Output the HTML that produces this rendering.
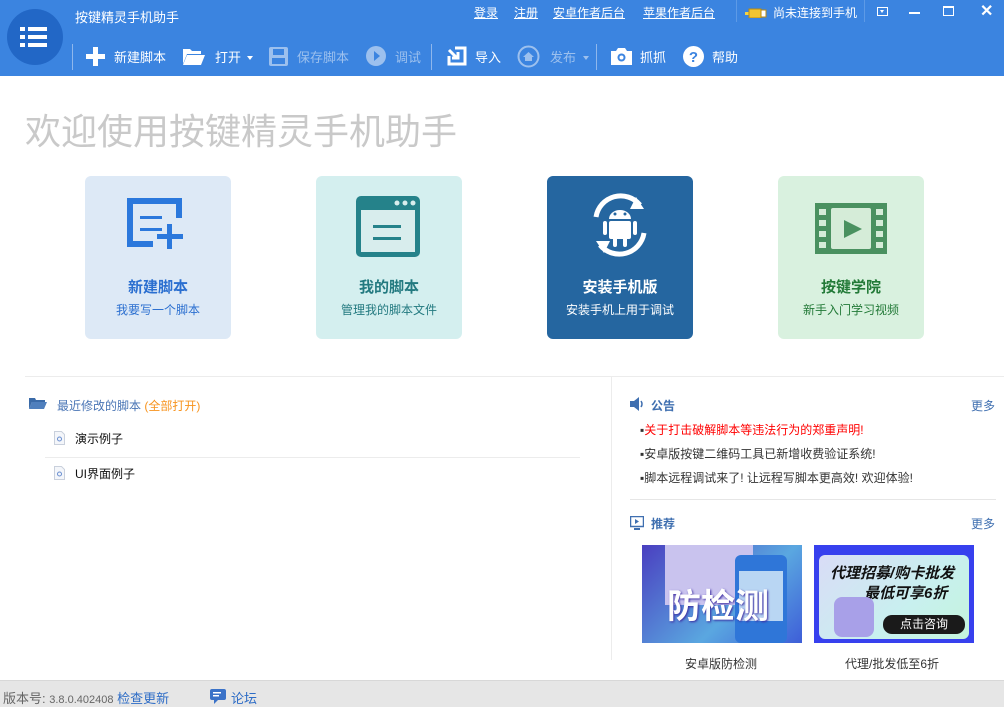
<!DOCTYPE html>
<html><head><meta charset="utf-8"><style>
*{margin:0;padding:0;box-sizing:border-box}
body{width:1004px;height:707px;overflow:hidden;background:#fff;font-family:"Liberation Sans","Noto Sans CJK SC",sans-serif;font-size:12px;position:relative;color:#333}
.a{position:absolute;white-space:nowrap}
#hd{position:absolute;left:0;top:0;width:1004px;height:76px;background:#3b84e0}
.tb{color:#fff;font-size:13px}
.dis{color:#9cc0ee}
.card{position:absolute;top:176px;width:146px;height:163px;border-radius:6px;text-align:center;overflow:hidden}
.card .t{position:absolute;top:100px;width:100%;font-size:15px;font-weight:bold}
.card .s{position:absolute;top:125px;width:100%;font-size:12px}
.card svg{position:absolute;left:40px;top:20px}
</style></head><body>
<div id="hd">
 <div class="a" style="left:7px;top:9px;width:56px;height:56px;border-radius:50%;background:#2267c6"></div>
 <svg class="a" style="left:20px;top:25px" width="30" height="24"><rect x="0" y="2" width="5" height="4" fill="#fff"/><rect x="8" y="2" width="19" height="4" fill="#fff"/><rect x="0" y="10" width="5" height="4" fill="#fff"/><rect x="8" y="10" width="19" height="4" fill="#fff"/><rect x="0" y="18" width="5" height="4" fill="#fff"/><rect x="8" y="18" width="19" height="4" fill="#fff"/></svg>
 <div class="a tb" style="left:75px;top:7px">按键精灵手机助手</div>
 <div class="a" style="left:72px;top:44px;width:1px;height:26px;background:#8fb7ec"></div>
 <svg class="a" style="left:86px;top:47px" width="19" height="19"><rect x="7" y="0" width="5" height="19" fill="#fff"/><rect x="0" y="7" width="19" height="5" fill="#fff"/></svg>
 <div class="a tb" style="left:114px;top:47px">新建脚本</div>
 <svg class="a" style="left:183px;top:47px" width="22" height="18"><path d="M0 2h7l2 2h9v3H4L0 17z" fill="#fff"/><path d="M4 8h18l-4 10H0z" fill="#fff"/></svg>
 <div class="a tb" style="left:215px;top:47px">打开</div>
 <div class="a" style="left:247px;top:56px;border:3px solid transparent;border-top:4px solid #fff"></div>
 <svg class="a" style="left:269px;top:47px" width="19" height="19"><rect width="19" height="19" rx="2" fill="#9cc0ee"/><rect x="4" y="2" width="11" height="6" fill="#3b84e0"/><rect x="3" y="11" width="13" height="6" fill="#3b84e0"/></svg>
 <div class="a tb dis" style="left:297px;top:47px">保存脚本</div>
 <svg class="a" style="left:366px;top:46px" width="20" height="20"><circle cx="10" cy="10" r="10" fill="#9cc0ee"/><path d="M8 5l6 5-6 5z" fill="#3b84e0"/></svg>
 <div class="a tb dis" style="left:395px;top:47px">调试</div>
 <div class="a" style="left:431px;top:44px;width:1px;height:26px;background:#8fb7ec"></div>
 <svg class="a" style="left:447px;top:46px" width="20" height="20"><path d="M8 2h10v16H2V10" fill="none" stroke="#fff" stroke-width="3"/><path d="M2 4l8 8M5 12h6V6" fill="none" stroke="#fff" stroke-width="3"/></svg>
 <div class="a tb" style="left:475px;top:47px">导入</div>
 <svg class="a" style="left:517px;top:45px" width="23" height="23"><circle cx="11.5" cy="11.5" r="10" fill="none" stroke="#9cc0ee" stroke-width="2"/><path d="M6 12l5.5-5 5.5 5h-2v4H8v-4z" fill="#9cc0ee"/></svg>
 <div class="a tb dis" style="left:550px;top:47px">发布</div>
 <div class="a" style="left:583px;top:56px;border:3px solid transparent;border-top:4px solid #9cc0ee"></div>
 <div class="a" style="left:596px;top:44px;width:1px;height:26px;background:#8fb7ec"></div>
 <svg class="a" style="left:611px;top:47px" width="21" height="18"><path d="M0 4h5l2-3h7l2 3h5v14H0z" fill="#fff"/><circle cx="10.5" cy="10.5" r="4" fill="#3b84e0"/><circle cx="10.5" cy="10.5" r="2" fill="#fff"/></svg>
 <div class="a tb" style="left:640px;top:47px">抓抓</div>
 <svg class="a" style="left:683px;top:46px" width="21" height="21"><circle cx="10.5" cy="10.5" r="10.5" fill="#fff"/><text x="10.5" y="16" text-anchor="middle" font-size="15" font-weight="bold" fill="#3b84e0" font-family="Liberation Sans">?</text></svg>
 <div class="a tb" style="left:712px;top:47px">帮助</div>
 <div class="a" style="left:474px;top:4px;color:#fff;font-size:12px;text-decoration:underline">登录</div>
 <div class="a" style="left:514px;top:4px;color:#fff;font-size:12px;text-decoration:underline">注册</div>
 <div class="a" style="left:553px;top:4px;color:#fff;font-size:12px;text-decoration:underline">安卓作者后台</div>
 <div class="a" style="left:643px;top:4px;color:#fff;font-size:12px;text-decoration:underline">苹果作者后台</div>
 <div class="a" style="left:736px;top:0;width:1px;height:22px;background:#5d9ae6"></div>
 <svg class="a" style="left:745px;top:8px" width="22" height="10"><rect x="0" y="4" width="4" height="3" fill="#f3d347"/><rect x="4" y="1" width="12" height="9" fill="#f2c531" stroke="#b98a12"/><rect x="16" y="2" width="5" height="7" fill="#fff" stroke="#b98a12"/></svg>
 <div class="a" style="left:773px;top:4px;color:#fff;font-size:12px">尚未连接到手机</div>
 <div class="a" style="left:864px;top:0;width:1px;height:22px;background:#5d9ae6"></div>
 <div class="a" style="left:877px;top:7px;width:11px;height:9px;border:1px solid #fff"></div>
 <div class="a" style="left:880px;top:10px;border:2.5px solid transparent;border-top:3px solid #fff"></div>
 <div class="a" style="left:909px;top:12px;width:11px;height:2px;background:#fff"></div>
 <div class="a" style="left:943px;top:6px;width:11px;height:10px;border:1.5px solid #fff;border-top-width:2px"></div>
 <div class="a" style="left:980px;top:1px;color:#fff;font-size:16px;font-weight:bold">✕</div>
</div>

<div class="a" style="left:25px;top:103px;font-size:36px;color:#c9c9c9">欢迎使用按键精灵手机助手</div>

<div class="card" style="left:85px;background:#dde9f6">
 <svg width="66" height="60"><path d="M28 48H5V5h49v17" fill="none" stroke="#2b78dc" stroke-width="6"/><rect x="15" y="20" width="22" height="3" fill="#2b78dc"/><rect x="15" y="32" width="22" height="3" fill="#2b78dc"/><rect x="42" y="28" width="5" height="25" fill="#2b78dc"/><rect x="32" y="38" width="26" height="5" fill="#2b78dc"/></svg>
 <div class="t" style="color:#2b6fd0">新建脚本</div><div class="s" style="color:#2b6fd0">我要写一个脚本</div>
</div>
<div class="card" style="left:316px;background:#d4efef">
 <svg width="66" height="64"><rect x="0" y="0" width="64" height="61" rx="5" fill="#25828a"/><rect x="5" y="14" width="54" height="42" fill="#d8eded"/><circle cx="41" cy="7" r="2.5" fill="#d8eded"/><circle cx="49" cy="7" r="2.5" fill="#d8eded"/><circle cx="57" cy="7" r="2.5" fill="#d8eded"/><rect x="17" y="29" width="28" height="3" fill="#25828a"/><rect x="17" y="41" width="28" height="3" fill="#25828a"/></svg>
 <div class="t" style="color:#237a80">我的脚本</div><div class="s" style="color:#237a80">管理我的脚本文件</div>
</div>
<div class="card" style="left:547px;background:#2566a0">
 <svg width="66" height="64" style="left:41px;top:17px"><path d="M8 24A25 25 0 0 1 52 12" fill="none" stroke="#fff" stroke-width="5"/><path d="M48 4l8 12-14 0z" fill="#fff"/><path d="M56 40A25 25 0 0 1 12 52" fill="none" stroke="#fff" stroke-width="5"/><path d="M16 60l-8-12 14 0z" fill="#fff"/><path d="M21 26a11 9 0 0 1 22 0z" fill="#fff"/><rect x="21" y="28" width="22" height="18" rx="2" fill="#fff"/><rect x="15" y="28" width="4" height="14" rx="2" fill="#fff"/><rect x="45" y="28" width="4" height="14" rx="2" fill="#fff"/><rect x="25" y="44" width="4" height="10" rx="2" fill="#fff"/><rect x="35" y="44" width="4" height="10" rx="2" fill="#fff"/><circle cx="27" cy="21" r="1.5" fill="#2566a0"/><circle cx="37" cy="21" r="1.5" fill="#2566a0"/></svg>
 <div class="t" style="color:#fff">安装手机版</div><div class="s" style="color:#fff">安装手机上用于调试</div>
</div>
<div class="card" style="left:778px;background:#d9f1df">
 <svg width="74" height="56" style="left:37px;top:27px"><rect width="72" height="51" fill="#4a9160"/><rect x="16" y="5" width="40" height="41" rx="2" fill="#d5ecd8"/><g fill="#d5ecd8"><rect x="4" y="6" width="7" height="6"/><rect x="4" y="17" width="7" height="6"/><rect x="4" y="28" width="7" height="6"/><rect x="4" y="39" width="7" height="6"/><rect x="61" y="6" width="7" height="6"/><rect x="61" y="17" width="7" height="6"/><rect x="61" y="28" width="7" height="6"/><rect x="61" y="39" width="7" height="6"/></g><path d="M29 17l18 9-18 9z" fill="#4a9160"/></svg>
 <div class="t" style="color:#237a38">按键学院</div><div class="s" style="color:#237a38">新手入门学习视频</div>
</div>

<div class="a" style="left:25px;top:376px;width:979px;height:1px;background:#ececec"></div>
<div class="a" style="left:611px;top:377px;width:1px;height:283px;background:#ececec"></div>

<svg class="a" style="left:29px;top:397px" width="18" height="12"><path d="M0 1h6l1 2h9v2H3L0 12z" fill="#3a6aa8"/><path d="M3 5h15l-3 7H0z" fill="#4f7fbd"/></svg>
<div class="a" style="left:57px;top:397px;color:#4a75b5;font-size:12px">最近修改的脚本 <span style="color:#f7931e">(全部打开)</span></div>
<svg class="a" style="left:54px;top:431px" width="11" height="14"><path d="M.5.5h7l3 3v10H.5z" fill="#f4f6fa" stroke="#c9d0dc"/><circle cx="5.5" cy="8" r="2" fill="none" stroke="#6a8fd0"/></svg>
<div class="a" style="left:75px;top:430px;color:#111;font-size:12px">演示例子</div>
<div class="a" style="left:45px;top:457px;width:535px;height:1px;background:#ececec"></div>
<svg class="a" style="left:54px;top:466px" width="11" height="14"><path d="M.5.5h7l3 3v10H.5z" fill="#f4f6fa" stroke="#c9d0dc"/><circle cx="5.5" cy="8" r="2" fill="none" stroke="#6a8fd0"/></svg>
<div class="a" style="left:75px;top:465px;color:#111;font-size:12px">UI界面例子</div>

<svg class="a" style="left:630px;top:397px" width="16" height="14"><path d="M0 4h4l5-4v14l-5-4H0z" fill="#3f6fb0"/><path d="M11 4q2 3 0 6" fill="none" stroke="#3f6fb0" stroke-width="1.5"/></svg>
<div class="a" style="left:651px;top:397px;color:#3f6fb0;font-size:12px;font-weight:bold">公告</div>
<div class="a" style="left:971px;top:397px;color:#3f6fb0;font-size:12px">更多</div>
<div class="a" style="left:640px;top:421px;color:#ff0000;font-size:12px"><span style="color:#333">▪</span>关于打击破解脚本等违法行为的郑重声明!</div>
<div class="a" style="left:640px;top:445px;color:#333;font-size:12px">▪安卓版按键二维码工具已新增收费验证系统!</div>
<div class="a" style="left:640px;top:469px;color:#333;font-size:12px">▪脚本远程调试来了! 让远程写脚本更高效! 欢迎体验!</div>
<div class="a" style="left:630px;top:499px;width:366px;height:1px;background:#e6e6e6"></div>
<svg class="a" style="left:630px;top:516px" width="14" height="14"><rect x=".5" y=".5" width="13" height="10" fill="none" stroke="#3f6fb0" stroke-width="1.5"/><path d="M5 3l4 2.5-4 2.5z" fill="#3f6fb0"/><rect x="4" y="12" width="6" height="2" fill="#3f6fb0"/></svg>
<div class="a" style="left:651px;top:515px;color:#3f6fb0;font-size:12px;font-weight:bold">推荐</div>
<div class="a" style="left:971px;top:515px;color:#3f6fb0;font-size:12px">更多</div>

<div class="a" style="left:642px;top:545px;width:160px;height:98px;background:linear-gradient(135deg,#4a3fc0,#5aa7e0 60%,#3e5ed8);overflow:hidden">
 <div class="a" style="left:23px;top:0;width:88px;height:60px;background:#c9c3ee"></div>
 <div class="a" style="left:93px;top:10px;width:52px;height:88px;border-radius:6px;background:#2f76d8"></div>
 <div class="a" style="left:97px;top:26px;width:44px;height:50px;background:#b9d6f3"></div>
 <div class="a" style="left:25px;top:34px;font-size:34px;font-weight:bold;color:#fff;text-shadow:1px 1px 2px #3a2aa0">防检测</div>
</div>
<div class="a" style="left:814px;top:545px;width:160px;height:98px;background:#3740ee;overflow:hidden">
 <div class="a" style="left:5px;top:10px;width:150px;height:84px;border-radius:6px;background:linear-gradient(135deg,#d9dcf6,#c8f0ef 60%,#c4f4dc)"></div>
 <div class="a" style="left:16px;top:17px;font-size:15px;font-weight:bold;font-style:italic;color:#111">代理招募/购卡批发</div>
 <div class="a" style="left:50px;top:37px;font-size:15px;font-weight:bold;font-style:italic;color:#111">最低可享6折</div>
 <div class="a" style="left:20px;top:52px;width:40px;height:40px;border-radius:8px;background:#a8a0e8"></div>
 <div class="a" style="left:69px;top:70px;width:82px;height:19px;border-radius:9px;background:#1a1a1a;color:#fff;font-size:12px;text-align:center;line-height:19px">点击咨询</div>
</div>
<div class="a" style="left:685px;top:655px;color:#333;font-size:12px">安卓版防检测</div>
<div class="a" style="left:845px;top:655px;color:#333;font-size:12px">代理/批发低至6折</div>

<div class="a" style="left:0;top:680px;width:1004px;height:27px;background:#e6e6e6;border-top:1px solid #d8d8d8"></div>
<div class="a" style="left:3px;top:688px;color:#666;font-size:13px">版本号: <span style="font-size:11px">3.8.0.402408</span> <span style="color:#2d6cc6">检查更新</span></div>
<svg class="a" style="left:210px;top:689px" width="16" height="15"><rect x="0" y="0" width="16" height="11" rx="2" fill="#3a72c8"/><path d="M4 10v5l4-4z" fill="#3a72c8"/><rect x="3" y="3" width="8" height="1.5" fill="#fff"/><rect x="3" y="6" width="6" height="1.5" fill="#fff"/></svg>
<div class="a" style="left:231px;top:688px;color:#2d6cc6;font-size:13px">论坛</div>
</body></html>
